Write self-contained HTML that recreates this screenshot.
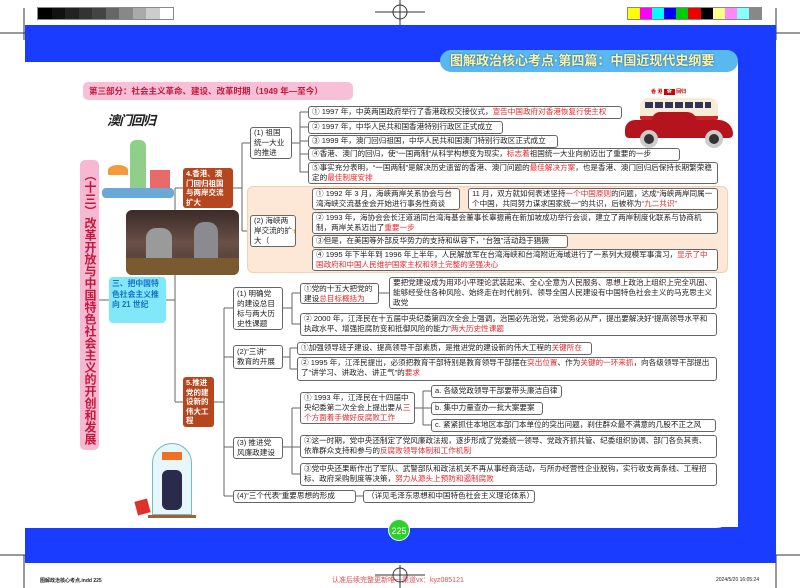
<!DOCTYPE html>
<html><head><meta charset="utf-8"><style>
*{margin:0;padding:0;box-sizing:border-box}
body{width:800px;height:588px;position:relative;background:#fff;overflow:hidden;font-family:"Liberation Sans","Noto Sans CJK SC",sans-serif;color:#222}
.a{position:absolute}
.b{position:absolute;border:1px solid #666;border-radius:3px;background:#fff;font-size:7.6px;line-height:10px;padding:0 3px;white-space:nowrap;overflow:hidden}
.w{white-space:normal}
.r{color:#e8262a}
.v{display:flex;align-items:center}
.n{white-space:nowrap}
</style></head><body>
<div class="a" style="left:37px;top:7px;width:137px;height:13px;display:flex;border:1px solid #888">
<div style="flex:1;background:#000"></div><div style="flex:1;background:#111"></div><div style="flex:1;background:#222"></div><div style="flex:1;background:#333"></div><div style="flex:1;background:#444"></div><div style="flex:1;background:#666"></div><div style="flex:1;background:#888"></div><div style="flex:1;background:#aaa"></div><div style="flex:1;background:#ccc"></div><div style="flex:1;background:#fff"></div></div>
<div class="a" style="left:627px;top:7px;width:135px;height:13px;display:flex;border:1px solid #888">
<div style="flex:1;background:#ff0"></div><div style="flex:1;background:#f0f"></div><div style="flex:1;background:#0ff"></div><div style="flex:1;background:#00f"></div><div style="flex:1;background:#0c0"></div><div style="flex:1;background:#e00"></div><div style="flex:1;background:#000"></div><div style="flex:1;background:#ff8"></div><div style="flex:1;background:#f8f"></div><div style="flex:1;background:#8ff"></div><div style="flex:1;background:#888"></div></div>
<svg class="a" style="left:0;top:0" width="800" height="588">
<g stroke="#333" stroke-width="1" fill="none">
<line x1="0" y1="33" x2="25" y2="33"/><line x1="24" y1="8" x2="24" y2="40"/>
<line x1="776" y1="33" x2="800" y2="33"/><line x1="776" y1="8" x2="776" y2="40"/>
<line x1="375" y1="12" x2="425" y2="12"/><line x1="400" y1="0" x2="400" y2="26"/><circle cx="400" cy="12" r="7"/>
<line x1="0" y1="555" x2="25" y2="555"/><line x1="24" y1="555" x2="24" y2="588"/>
<line x1="776" y1="555" x2="800" y2="555"/><line x1="776" y1="555" x2="776" y2="588"/>
<line x1="375" y1="575" x2="425" y2="575"/><line x1="400" y1="565" x2="400" y2="588"/><circle cx="400" cy="575" r="7"/>
</g></svg>
<div class="a" style="left:25px;top:25px;width:751px;height:37px;background:#1a3cff"></div>
<div class="a" style="left:738px;top:25px;width:38px;height:530px;background:#1a3cff"></div>
<div class="a" style="left:25px;top:527px;width:751px;height:36px;background:#1a3cff"></div>
<div class="a" style="left:25px;top:62px;width:713px;height:466px;background:#fff;border-radius:0 14px 22px 0"></div>
<div class="a" style="left:440px;top:50px;width:298px;height:22px;background:#5ab8f0;border-radius:11px;color:#fff3a0;font-weight:bold;font-size:13px;line-height:22px;padding-left:10px;text-shadow:0 0 2px #1a5ca8">图解政治核心考点·第四篇：中国近现代史纲要</div>
<div class="a" style="left:388px;top:519px;width:22px;height:22px;border-radius:50%;background:#2ed12a;color:#fff;font-size:9px;line-height:22px;text-align:center;border:1px solid #fff">225</div>
<div class="a" style="left:40px;top:577px;font-size:5px;font-weight:bold">图解政治核心考点.indd 225</div>
<div class="a" style="left:332px;top:575px;font-size:7px;color:#e05050">认准后续完整更新唯一渠道vx：kyz085121</div>
<div class="a" style="left:716px;top:577px;font-size:5px">2024/5/20 16:05:24</div>
<div class="a" style="left:83px;top:82px;width:270px;height:18px;background:#f7c0d6;border-radius:5px;color:#c3183c;font-weight:bold;font-size:8.5px;line-height:18px;padding-left:6px">第三部分：社会主义革命、建设、改革时期（1949 年—至今）</div>
<svg class="a" style="left:0;top:0" width="800" height="588"><g stroke="#666" stroke-width="1" fill="none">
<line x1="99" y1="300" x2="109" y2="300"/><line x1="166" y1="300" x2="175" y2="300"/>
<line x1="175" y1="188" x2="175" y2="402"/><line x1="175" y1="188" x2="183" y2="188"/><line x1="175" y1="402" x2="183" y2="402"/>
<line x1="233" y1="188" x2="242" y2="188"/><line x1="242" y1="143" x2="242" y2="231"/><line x1="242" y1="143" x2="250" y2="143"/><line x1="242" y1="231" x2="250" y2="231"/>
<line x1="292" y1="143" x2="300" y2="143"/><line x1="300" y1="112" x2="300" y2="172"/>
<line x1="300" y1="112" x2="308" y2="112"/><line x1="300" y1="127" x2="308" y2="127"/><line x1="300" y1="141" x2="308" y2="141"/><line x1="300" y1="154" x2="308" y2="154"/><line x1="300" y1="172" x2="308" y2="172"/>
<line x1="296" y1="231" x2="304" y2="231"/><line x1="304" y1="199" x2="304" y2="260"/>
<line x1="304" y1="199" x2="312" y2="199"/><line x1="304" y1="222" x2="312" y2="222"/><line x1="304" y1="241" x2="312" y2="241"/><line x1="304" y1="260" x2="312" y2="260"/>
<line x1="460" y1="199" x2="468" y2="199"/>
<line x1="214" y1="402" x2="224" y2="402"/><line x1="224" y1="308" x2="224" y2="496"/>
<line x1="224" y1="308" x2="233" y2="308"/><line x1="224" y1="357" x2="233" y2="357"/><line x1="224" y1="447" x2="233" y2="447"/><line x1="224" y1="496" x2="233" y2="496"/>
<line x1="283" y1="308" x2="292" y2="308"/><line x1="292" y1="293" x2="292" y2="324"/><line x1="292" y1="293" x2="300" y2="293"/><line x1="292" y1="324" x2="300" y2="324"/>
<line x1="379" y1="293" x2="389" y2="293"/>
<line x1="283" y1="357" x2="290" y2="357"/><line x1="290" y1="348" x2="290" y2="369"/><line x1="290" y1="348" x2="297" y2="348"/><line x1="290" y1="369" x2="297" y2="369"/>
<line x1="283" y1="447" x2="292" y2="447"/><line x1="292" y1="408" x2="292" y2="474"/><line x1="292" y1="408" x2="300" y2="408"/><line x1="292" y1="447" x2="300" y2="447"/><line x1="292" y1="474" x2="300" y2="474"/>
<line x1="415" y1="408" x2="423" y2="408"/><line x1="423" y1="391" x2="423" y2="425"/><line x1="423" y1="391" x2="431" y2="391"/><line x1="423" y1="408" x2="431" y2="408"/><line x1="423" y1="425" x2="431" y2="425"/>
<line x1="356" y1="496" x2="363" y2="496"/>
</g></svg>
<div class="a" style="left:80px;top:160px;width:19px;height:290px;background:#f7b8d2;border-radius:5px;color:#c3183c;font-weight:bold;font-size:12px;line-height:19px;writing-mode:vertical-rl;text-align:center;padding-top:4px;overflow:hidden">（十三）改革开放与中国特色社会主义的开创和发展</div>
<div class="a" style="left:107px;top:110px;font-size:13px;font-weight:bold;font-style:italic;letter-spacing:-1px">澳门回归</div>
<div class="a" style="left:130px;top:140px;width:16px;height:50px;background:#8fcf8a;border-radius:6px 6px 0 0"></div>
<div class="a" style="left:108px;top:165px;width:20px;height:10px;background:#f49a3a;border-radius:50% 50% 0 0"></div>
<div class="a" style="left:150px;top:170px;width:20px;height:22px;background:#e86a6a"></div>
<div class="a" style="left:102px;top:188px;width:72px;height:10px;background:#6aa8d8;border-radius:4px"></div>
<div class="a v n" style="left:183px;top:168px;width:50px;height:40px;background:#b5461e;border-radius:3px;color:#fff;font-weight:bold;font-size:7.5px;line-height:9.5px;padding:0 3px">4.香港、澳<br>门回归祖国<br>与两岸交流<br>扩大</div>
<div class="a" style="left:126px;top:210px;width:113px;height:65px;border-radius:6px;background:linear-gradient(180deg,#3a2a28,#6a5048 50%,#4a3830);overflow:hidden">
<div class="a" style="left:20px;top:18px;width:26px;height:35px;background:#9a9a9a;border-radius:10px 10px 0 0"></div>
<div class="a" style="left:68px;top:12px;width:24px;height:38px;background:#8a8a90;border-radius:10px 10px 0 0"></div>
<div class="a" style="left:0;top:48px;width:113px;height:17px;background:#7a5a30"></div></div>
<div class="a" style="left:109px;top:277px;width:57px;height:46px;background:#80e8f8;border-radius:4px;color:#1a6cc8;font-weight:bold;font-size:7.8px;line-height:10.5px;padding:2px 3px">三、把中国特色社会主义推向 21 世纪</div>
<div class="a v n" style="left:183px;top:377px;width:31px;height:50px;background:#b5461e;border-radius:3px;color:#fff;font-weight:bold;font-size:7.5px;line-height:9.5px;padding:0 3px">5.推进<br>党的建<br>设新的<br>伟大工<br>程</div>
<div class="a" style="left:152px;top:443px;width:40px;height:72px;border:1px solid #7bb;border-radius:20px 20px 0 0;background:#e6f6fa"></div>
<div class="a" style="left:162px;top:452px;width:20px;height:8px;background:#f07020"></div>
<div class="a" style="left:162px;top:470px;width:20px;height:40px;background:#2a2a4a;border-radius:6px"></div>
<div class="a" style="left:136px;top:500px;width:13px;height:14px;background:#e0302a;transform:rotate(-15deg)"></div>
<div class="a" style="left:148px;top:515px;width:48px;height:3px;background:#a0603a"></div>
<div class="a" style="left:247px;top:186px;width:481px;height:87px;background:#fde8d8;border-radius:6px;border:1px solid #f3d0b0"></div>
<div class="b v" style="left:250px;top:127px;width:42px;height:32px;padding:0 3px">(1) 祖国<br>统一大业<br>的推进</div>
<div class="b" style="left:308px;top:106px;width:314px;height:13px">① 1997 年，中英两国政府举行了香港政权交接仪式，<span class="r">宣告中国政府对香港恢复行使主权</span></div>
<div class="b" style="left:308px;top:121px;width:195px;height:13px">② 1997 年，中华人民共和国香港特别行政区正式成立</div>
<div class="b" style="left:308px;top:135px;width:250px;height:13px">③ 1999 年，澳门回归祖国，中华人民共和国澳门特别行政区正式成立</div>
<div class="b" style="left:308px;top:148px;width:372px;height:13px">④香港、澳门的回归，使“一国两制”从科学构想变为现实，<span class="r">标志着</span>祖国统一大业向前迈出了重要的一步</div>
<div class="b w" style="left:308px;top:162px;width:410px;height:22px">⑤事实充分表明，“一国两制”是解决历史遗留的香港、澳门问题的<span class="r">最佳解决方案</span>，也是香港、澳门回归后保持长期繁荣稳定的<span class="r">最佳制度安排</span></div>
<div class="b v" style="left:250px;top:215px;width:46px;height:32px;padding:0 3px">(2) 海峡两<br>岸交流的扩<br>大（<span style="color:#f0a000">★</span>）</div>
<div class="b w" style="left:312px;top:188px;width:148px;height:22px">① 1992 年 3 月，海峡两岸关系协会与台湾海峡交流基金会开始进行事务性商谈</div>
<div class="b w" style="left:468px;top:188px;width:250px;height:22px">11 月，双方就如何表述坚持<span class="r">一个中国原则</span>的问题，达成“海峡两岸同属一个中国，共同努力谋求国家统一”的共识，后被称为<span class="r">“九二共识”</span></div>
<div class="b w" style="left:312px;top:212px;width:406px;height:22px">② 1993 年，海协会会长汪道涵同台湾海基会董事长辜振甫在新加坡成功举行会谈，建立了两岸制度化联系与协商机制，两岸关系迈出了<span class="r">重要一步</span></div>
<div class="b" style="left:312px;top:235px;width:256px;height:13px">③但是，在美国等外部反华势力的支持和纵容下，“台独”活动趋于猖獗</div>
<div class="b w" style="left:312px;top:249px;width:406px;height:22px">④ 1995 年下半年到 1996 年上半年，人民解放军在台湾海峡和台湾附近海域进行了一系列大规模军事演习，<span class="r">显示了中国政府和中国人民维护国家主权和领土完整的坚强决心</span></div>
<div class="b v" style="left:233px;top:287px;width:50px;height:43px">(1) 明确党<br>的建设总目<br>标与两大历<br>史性课题</div>
<div class="b w" style="left:300px;top:283px;width:79px;height:21px">①党的十五大把党的建设<span class="r">总目标概括为</span></div>
<div class="b w" style="left:389px;top:277px;width:328px;height:32px">要把党建设成为用邓小平理论武装起来、全心全意为人民服务、思想上政治上组织上完全巩固、能够经受住各种风险、始终走在时代前列、领导全国人民建设有中国特色社会主义的马克思主义政党</div>
<div class="b w" style="left:300px;top:313px;width:417px;height:23px">② 2000 年，江泽民在十五届中央纪委第四次全会上强调，治国必先治党，治党务必从严，提出要解决好“提高领导水平和执政水平、增强拒腐防变和抵御风险的能力”<span class="r">两大历史性课题</span></div>
<div class="b v" style="left:233px;top:345px;width:50px;height:24px">(2)“三讲”<br>教育的开展</div>
<div class="b" style="left:297px;top:342px;width:295px;height:13px">①加强领导班子建设、提高领导干部素质，是推进党的建设新的伟大工程的<span class="r">关键所在</span></div>
<div class="b w" style="left:297px;top:357px;width:420px;height:24px">② 1995 年，江泽民提出，必须把教育干部特别是教育领导干部摆在<span class="r">突出位置</span>、作为<span class="r">关键的一环来抓</span>，向各级领导干部提出了“讲学习、讲政治、讲正气”的<span class="r">要求</span></div>
<div class="b w" style="left:300px;top:392px;width:115px;height:32px">① 1993 年，江泽民在十四届中央纪委第二次全会上提出要从<span class="r">三个方面着手做好反腐败工作</span></div>
<div class="b" style="left:431px;top:385px;width:131px;height:13px">a. 各级党政领导干部要带头廉洁自律</div>
<div class="b" style="left:431px;top:402px;width:112px;height:13px">b. 集中力量查办一批大案要案</div>
<div class="b" style="left:431px;top:419px;width:285px;height:13px">c. 紧紧抓住本地区本部门本单位的突出问题，刹住群众最不满意的几股不正之风</div>
<div class="b v" style="left:233px;top:437px;width:50px;height:22px">(3) 推进党<br>风廉政建设</div>
<div class="b w" style="left:300px;top:435px;width:417px;height:23px">②这一时期，党中央还制定了党风廉政法规，逐步形成了党委统一领导、党政齐抓共管、纪委组织协调、部门各负其责、依靠群众支持和参与的<span class="r">反腐败领导体制和工作机制</span></div>
<div class="b w" style="left:300px;top:463px;width:417px;height:23px">③党中央还果断作出了军队、武警部队和政法机关不再从事经商活动，与所办经营性企业脱钩，实行收支两条线、工程招标、政府采购制度等决策，<span class="r">努力从源头上预防和遏制腐败</span></div>
<div class="b" style="left:233px;top:490px;width:123px;height:13px">(4)“三个代表”重要思想的形成</div>
<div class="b" style="left:363px;top:490px;width:172px;height:13px">（详见毛泽东思想和中国特色社会主义理论体系）</div>
<div class="a" style="left:651px;top:88px;font-size:5px;color:#c00;font-weight:bold">香 港 <span style="background:#c00;color:#fff;padding:0 3px">✿</span> 回归</div>
<div class="a" style="left:640px;top:98px;width:78px;height:22px;background:#f6ecd8;border-radius:8px 8px 2px 2px;border-bottom:4px solid #c22"></div>
<div class="a" style="left:645px;top:102px;width:66px;height:6px;background:repeating-linear-gradient(90deg,#335 0 8px,#f6ecd8 8px 10px)"></div>
<div class="a" style="left:625px;top:120px;width:108px;height:18px;background:#b5141e;border-radius:10px 14px 4px 4px"></div>
<div class="a" style="left:652px;top:112px;width:45px;height:10px;background:#b5141e;border-radius:8px 10px 0 0"></div>
<div class="a" style="left:640px;top:130px;width:18px;height:18px;border-radius:50%;background:#333;border:4px solid #ccc"></div>
<div class="a" style="left:705px;top:130px;width:18px;height:18px;border-radius:50%;background:#333;border:4px solid #ccc"></div>
</body></html>
